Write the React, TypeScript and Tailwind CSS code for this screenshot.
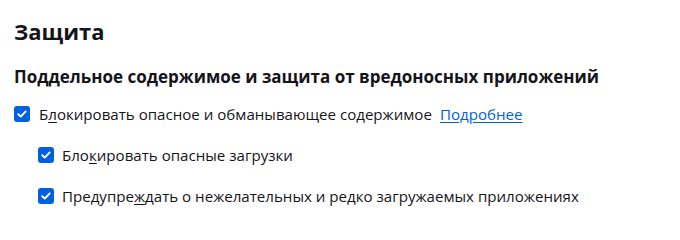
import React from "react";

function Check() {
  return (
    <span className="w-4 h-4 shrink-0 rounded-[3px] bg-[#0061e0] flex items-center justify-center">
      <svg width="12" height="12" viewBox="0 0 12 12" fill="none">
        <path d="M2.3 6.2 L4.8 8.6 L9.7 3.4" stroke="white" strokeWidth="1.9" strokeLinecap="round" strokeLinejoin="round" />
      </svg>
    </span>
  );
}

export default function App() {
  return (
    <div className="w-[680px] h-[234px] bg-white text-[#15141a] pl-[14px] pt-[16px]" style={{ fontFamily: '"Open Sans", "Noto Sans", sans-serif' }}>
      <h1 className="text-[22px] leading-[30px] font-bold">Защита</h1>
      <h2 className="mt-[19px] text-[17px] leading-[24px] font-bold">Поддельное содержимое и защита от вредоносных приложений</h2>
      <div className="mt-[15px] flex items-center gap-[9px] text-[15.1px] leading-[20px]">
        <Check />
        <span>
          Б<span className="underline underline-offset-2">л</span>окировать опасное и обманывающее содержимое
        </span>
        <a className="ml-[-1px] text-[#0061e0] underline underline-offset-2">Подробнее</a>
      </div>
      <div className="pl-[24px]">
        <div className="mt-[21px] flex items-center gap-[8px] text-[15.1px] leading-[20px]">
          <Check />
          <span>
            Бло<span className="underline underline-offset-2">к</span>ировать опасные загрузки
          </span>
        </div>
        <div className="mt-[21px] flex items-center gap-[8px] text-[15.1px] leading-[20px]">
          <Check />
          <span>
            Предупре<span className="underline underline-offset-2">ж</span>дать о нежелательных и редко загружаемых приложениях
          </span>
        </div>
      </div>
    </div>
  );
}
